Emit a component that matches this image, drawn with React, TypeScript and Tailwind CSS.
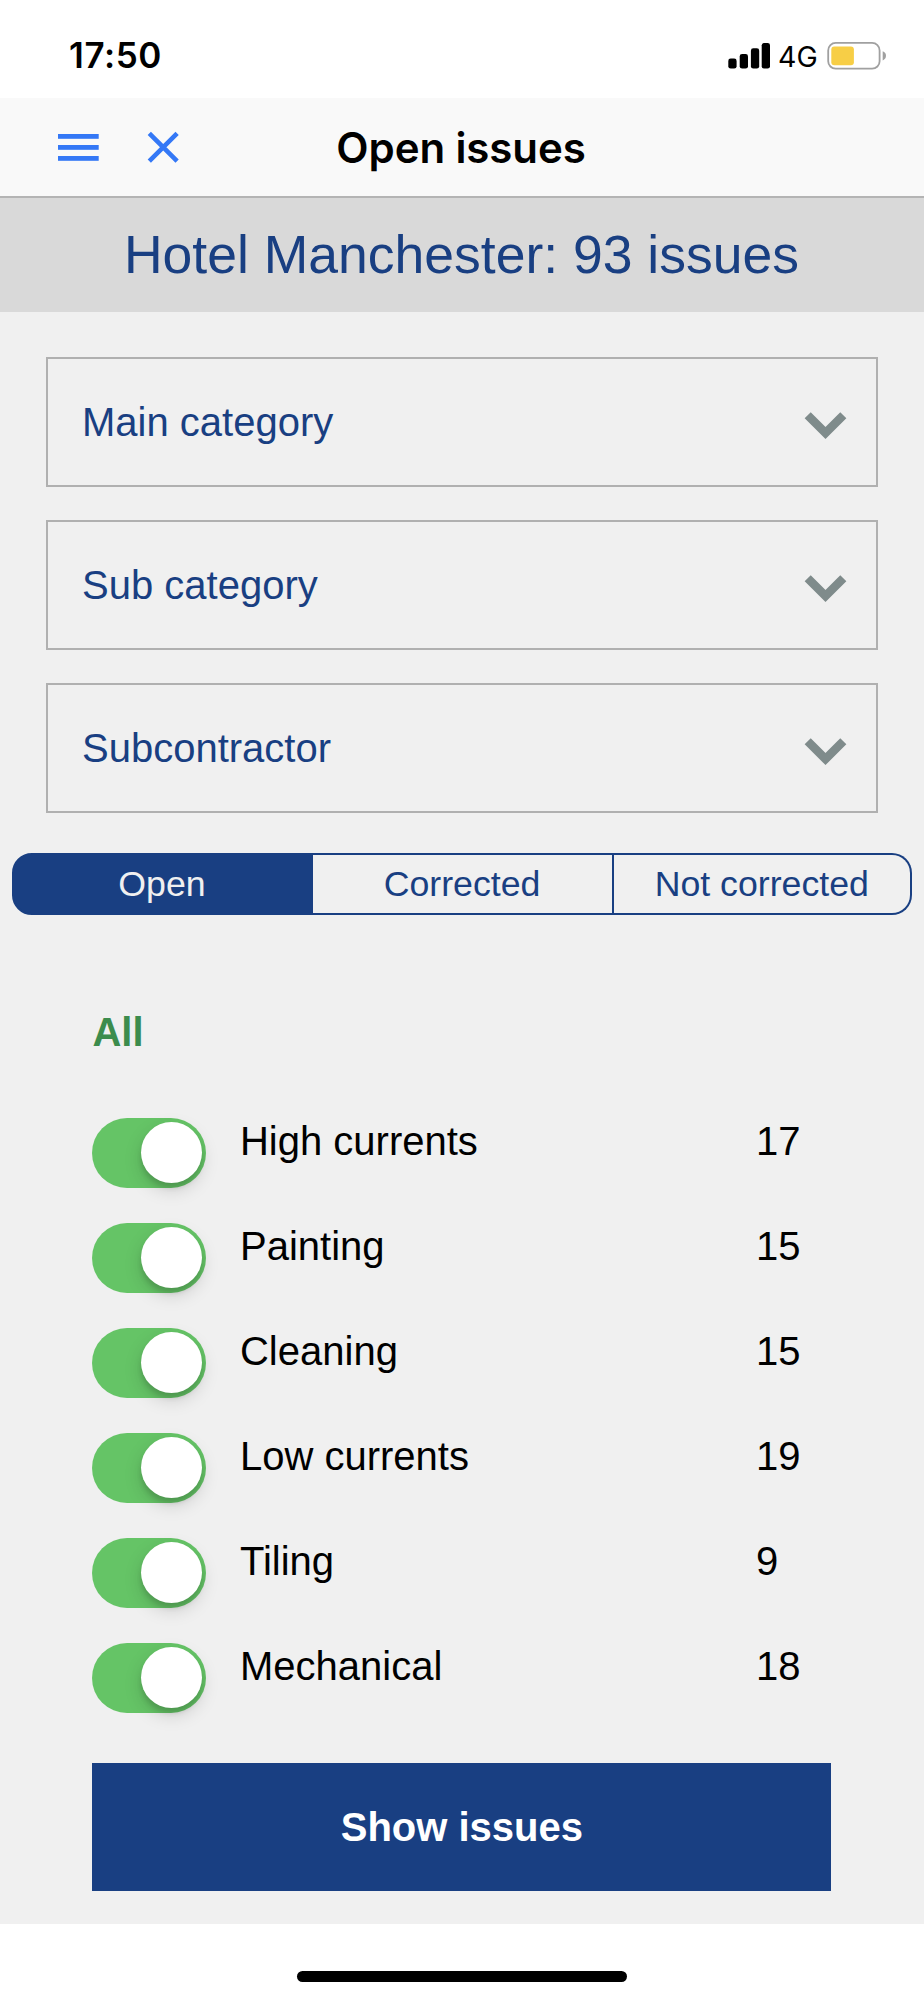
import { useState } from "react";

const filters = ["Main category", "Sub category", "Subcontractor"];

const tabs = ["Open", "Corrected", "Not corrected"];

const categories = [
  { name: "High currents", count: 17 },
  { name: "Painting", count: 15 },
  { name: "Cleaning", count: 15 },
  { name: "Low currents", count: 19 },
  { name: "Tiling", count: 9 },
  { name: "Mechanical", count: 18 },
];

function StatusBar() {
  return (
    <div className="flex h-[98px] items-start justify-between bg-white pt-[38px] pr-[37px] pl-[69px] font-['Inter',sans-serif] text-black">
      <span className="text-[35px] leading-[35px] font-semibold tracking-[0.6px]">
        17:50
      </span>

      <div className="flex h-[35px] items-center">
        {/* signal */}
        <svg width="43" height="27" viewBox="0 0 43 27" fill="#000">
          <rect x="1.3" y="16.6" width="8.3" height="10" rx="2.4" />
          <rect x="12.7" y="12" width="8.3" height="14.6" rx="2.4" />
          <rect x="23.9" y="6.3" width="8.3" height="20.3" rx="2.4" />
          <rect x="34.7" y="0.9" width="8.3" height="25.7" rx="2.4" />
        </svg>
        <span className="ml-[8px] w-[49px] pt-px text-[28.5px] leading-[35px]">
          4G
        </span>
        {/* battery */}
        <svg width="60" height="30" viewBox="0 0 60 30">
          <rect
            x="1.2"
            y="1.9"
            width="51.4"
            height="25.8"
            rx="7.5"
            fill="none"
            stroke="#a0a0a0"
            strokeWidth="1.8"
          />
          <rect x="4.3" y="5.5" width="22.6" height="18.8" rx="3" fill="#f7ce46" />
          <path d="M55.7 10.2 Q59 11.5 59 14.8 Q59 18 55.7 19.4 Z" fill="#a0a0a0" />
        </svg>
      </div>
    </div>
  );
}

function NavBar() {
  return (
    <div className="grid h-[100px] grid-cols-[1fr_auto_1fr] items-center border-b-2 border-[#b4b4b4] bg-[#f9f9f9]">
      <div className="flex items-center gap-[48px] pl-[58px]">
        <button>
          <svg width="41" height="32" viewBox="0 0 41 32" fill="#3478f6">
            <rect y="3" width="40.7" height="4.8" />
            <rect y="14" width="40.7" height="4.8" />
            <rect y="25" width="40.7" height="4.8" />
          </svg>
        </button>
        <button>
          <svg width="32" height="32" viewBox="0 0 32 32">
            <path
              d="M2.3 2.3 L30.1 30.1 M30.1 2.3 L2.3 30.1"
              stroke="#3478f6"
              strokeWidth="4.6"
            />
          </svg>
        </button>
      </div>
      <h1 className="pt-[2px] pr-[2px] font-['Inter',sans-serif] text-[42px] leading-[50px] font-semibold tracking-[-0.1px] text-black">
        Open issues
      </h1>
      <div />
    </div>
  );
}

function Select({ label }: { label: string }) {
  return (
    <button className="flex h-[130px] w-full items-center justify-between border-2 border-[#b0b0b0] pr-[28px] pl-[34px] text-[40px] text-[#193f82]">
      {label}
      <svg width="44" height="30" viewBox="0 0 44 30" className="mt-[7px]">
        <path
          d="M3.7 4.2 L21.5 22 L39.3 4.2"
          fill="none"
          stroke="#7f8b8b"
          strokeWidth="8.6"
        />
      </svg>
    </button>
  );
}

function Toggle({ on, onClick }: { on: boolean; onClick: () => void }) {
  return (
    <button
      onClick={onClick}
      className={`flex h-[70px] w-[114px] items-center rounded-full px-[4.5px] pb-[1px] ${
        on ? "justify-end bg-[#65c466]" : "justify-start bg-[#d9d9d9]"
      }`}
    >
      <span className="size-[60.5px] rounded-full bg-white shadow-[0_7px_18px_rgba(0,0,0,0.15),0_5px_5px_rgba(0,0,0,0.12)]" />
    </button>
  );
}

export default function App() {
  const [tab, setTab] = useState("Open");
  const [off, setOff] = useState<string[]>([]);

  const toggle = (name: string) =>
    setOff(off.includes(name) ? off.filter((n) => n !== name) : [...off, name]);

  return (
    <div className="flex h-[2000px] w-[924px] flex-col overflow-hidden bg-[#f0f0f0] font-['Liberation_Sans',Arial,sans-serif]">
      <StatusBar />
      <NavBar />

      <div className="flex h-[114px] items-center justify-center bg-[#d9d9d9] pr-[1px] text-[53.5px] text-[#193f82]">
        Hotel Manchester: 93 issues
      </div>

      <div className="mx-[46px] mt-[45px] flex flex-col gap-[33px]">
        {filters.map((label) => (
          <Select key={label} label={label} />
        ))}
      </div>

      {/* segmented control */}
      <div className="mr-[12px] ml-[11.5px] mt-[40px] grid h-[62px] grid-cols-[301px_301px_1fr]">
        {tabs.map((name) => (
          <button
            key={name}
            onClick={() => setTab(name)}
            className={`border-y-2 border-r-2 border-[#193f82] text-[35.7px] leading-[58px] first:rounded-l-[20px] first:border-l-2 last:rounded-r-[20px] ${
              tab === name ? "bg-[#193f82] text-[#f0f0f0]" : "text-[#193f82]"
            }`}
          >
            {name}
          </button>
        ))}
      </div>

      <div className="mt-[94px] mr-[92.6px] ml-[92.4px] flex flex-col">
        <button
          onClick={() => setOff([])}
          className="self-start text-[40px] leading-[46px] font-bold text-[#3c8c4d]"
        >
          All
        </button>

        <div className="mt-[63px] flex flex-col gap-[35px]">
          {categories.map(({ name, count }) => (
            <div key={name} className="flex h-[70px] items-start text-[40px] leading-[47px] text-black">
              <Toggle on={!off.includes(name)} onClick={() => toggle(name)} />
              <span className="ml-[33.6px] w-[516px]">{name}</span>
              <span>{count}</span>
            </div>
          ))}
        </div>

        <button className="mt-[50px] h-[128px] bg-[#193f82] text-[40px] font-bold text-white">
          Show issues
        </button>
      </div>

      <div className="mt-auto flex h-[76px] items-start justify-center bg-white pt-[47px]">
        <div className="h-[11px] w-[330px] rounded-full bg-black" />
      </div>
    </div>
  );
}
